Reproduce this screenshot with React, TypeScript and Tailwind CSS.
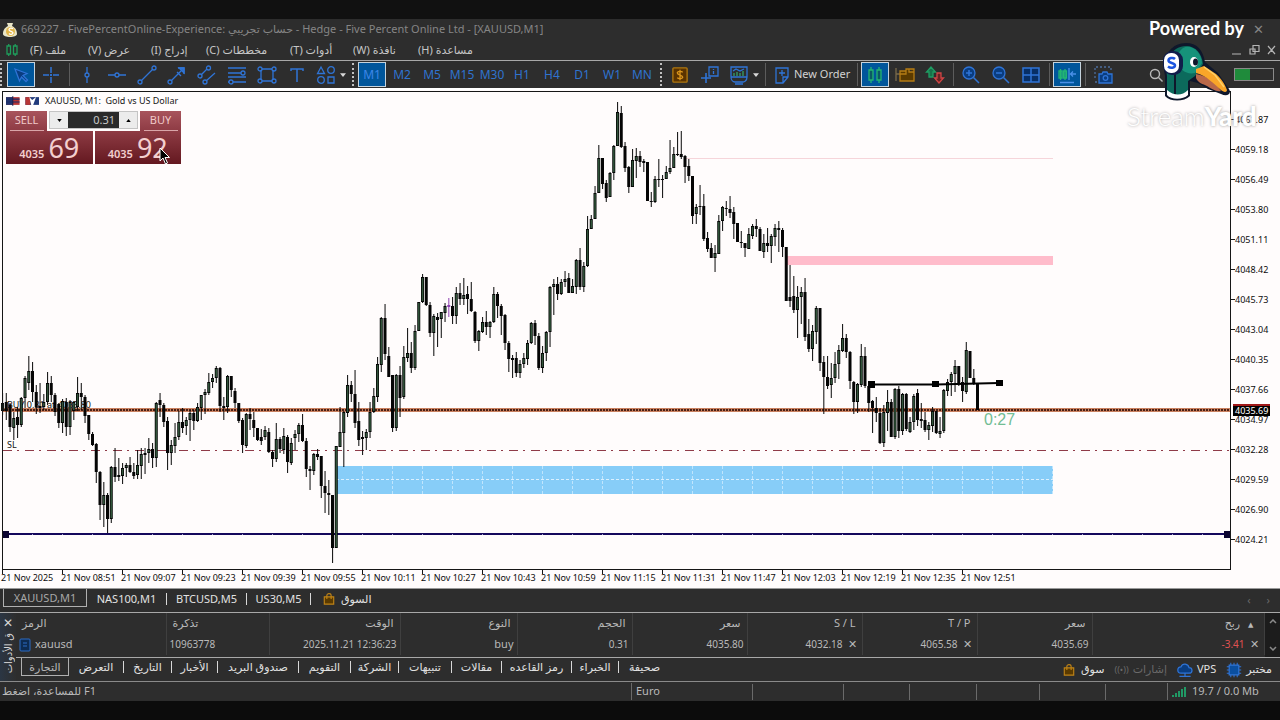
import type { ReactNode } from 'react'

// One-minute candles: [high, bodyTop, bodyBottom, low, kind]; kind 1 = up, 0 = down, 2 = flat marker
type Candle = [number, number, number, number, number]

const candles: Candle[] = [
  [393,403,411,415,1],[393,402,411,420,0],[403,405,427,432,0],[412,418,428,440,1],[407,417,425,438,0],[397,398,425,427,1],[376,378,398,408,1],[356,371,383,390,1],[362,371,392,402,0],[385,392,407,414,0],
  [383,406,408,413,0],[394,402,407,410,1],[372,383,402,405,1],[376,383,395,402,0],[393,395,412,416,0],[403,404,423,428,0],[399,401,423,433,1],[398,402,427,436,0],[400,402,427,435,1],[401,402,411,420,1],
  [377,393,407,411,1],[383,393,397,410,0],[395,397,416,423,0],[415,415,434,440,0],[432,434,445,446,0],[443,444,472,483,0],[471,472,505,520,0],[482,495,505,527,1],[493,495,519,533,0],[466,467,519,523,1],
  [448,467,477,482,0],[458,475,477,481,0],[463,468,476,484,1],[463,465,468,477,1],[457,465,472,473,0],[463,472,476,479,0],[450,465,475,479,1],[448,454,466,479,1],[448,453,455,474,0],[438,449,453,463,1],
  [443,449,458,468,0],[402,403,458,467,1],[393,400,405,417,0],[403,405,422,427,0],[417,421,453,470,0],[440,445,453,465,1],[423,437,446,453,1],[411,422,437,440,1],[408,422,428,433,0],[417,420,426,435,1],
  [410,413,420,441,1],[410,413,421,430,0],[403,407,421,422,1],[395,395,408,420,1],[389,392,395,414,1],[373,382,393,395,1],[374,378,382,388,1],[366,368,378,383,1],[367,368,406,412,0],[397,406,408,420,0],
  [375,376,407,413,1],[376,376,390,397,0],[388,391,403,408,0],[403,403,421,423,0],[418,420,445,453,0],[413,414,446,448,1],[408,414,419,430,0],[412,420,428,437,0],[428,428,440,441,0],[429,437,441,445,0],
  [426,430,437,440,1],[428,432,452,453,0],[450,452,459,467,0],[423,439,459,462,1],[437,439,449,453,0],[428,436,450,454,1],[435,437,462,473,0],[438,443,463,465,1],[430,434,438,450,1],[423,425,434,442,1],
  [414,425,441,442,0],[438,441,469,477,0],[466,469,471,490,0],[453,454,471,475,1],[449,454,457,460,0],[456,456,486,498,0],[471,486,493,513,0],[480,493,495,515,0],[495,495,548,563,0],[446,446,548,548,1],
  [407,432,447,447,1],[411,412,433,467,1],[375,385,413,417,1],[381,385,394,402,0],[370,394,423,428,0],[402,421,440,446,0],[431,437,439,455,1],[429,432,438,450,1],[402,412,432,438,1],[388,396,412,413,1],
  [357,364,397,402,1],[317,318,365,372,1],[304,318,354,360,0],[347,356,377,377,0],[375,375,428,432,0],[374,375,428,431,1],[366,375,398,417,0],[346,357,397,399,1],[328,353,358,362,1],[342,353,368,373,0],
  [325,331,368,370,1],[302,302,331,331,1],[274,277,302,303,1],[277,277,305,306,0],[302,305,333,337,0],[314,316,333,356,1],[313,317,320,347,0],[312,312,319,338,1],[303,306,313,322,1],[298,305,307,317,2],
  [297,306,316,324,0],[287,293,316,324,1],[283,293,299,305,0],[278,295,299,305,1],[286,294,299,314,0],[282,299,311,312,0],[311,312,341,343,0],[330,331,341,351,1],[317,322,332,333,1],[311,322,327,335,0],
  [321,322,327,338,1],[287,294,322,323,1],[292,294,306,318,0],[304,306,316,335,0],[314,315,343,350,0],[341,343,359,372,0],[355,358,360,378,0],[352,358,373,377,0],[360,364,373,378,1],[353,358,364,368,1],
  [340,343,359,365,1],[322,323,343,344,1],[320,323,336,345,0],[333,336,368,370,0],[346,353,368,373,1],[331,332,353,361,1],[286,287,332,347,1],[279,284,287,315,1],[277,284,294,300,0],[279,282,294,295,1],
  [271,279,282,287,1],[273,278,293,293,0],[279,286,293,293,1],[259,260,287,294,1],[248,260,287,290,0],[262,266,287,292,1],[216,229,266,267,1],[215,219,229,229,1],[186,193,219,219,1],[145,158,193,193,1],
  [158,158,184,189,0],[180,183,198,202,0],[172,173,197,197,1],[145,146,173,180,1],[102,112,146,146,1],[106,113,147,148,0],[142,146,168,172,0],[166,167,187,193,0],[149,160,187,187,1],[148,156,161,178,1],
  [151,156,162,167,0],[159,161,163,172,0],[162,162,201,201,0],[192,201,202,207,0],[176,179,202,203,1],[159,179,180,187,0],[175,179,180,198,0],[166,172,179,179,1],[140,168,172,174,1],[147,154,168,168,1],
  [132,154,155,156,0],[131,154,157,159,0],[155,156,167,183,0],[159,166,176,181,0],[176,176,216,224,0],[204,207,214,224,1],[185,206,207,215,0],[194,206,239,241,0],[232,238,249,252,0],[243,248,258,258,0],
  [245,253,258,272,1],[215,221,254,254,1],[206,207,221,231,1],[201,208,209,216,0],[196,209,213,218,0],[207,212,224,239,0],[223,223,242,242,0],[231,242,243,248,0],[243,243,248,257,0],[228,234,249,249,1],
  [224,226,236,239,1],[219,226,229,237,0],[227,229,251,251,0],[234,243,252,258,1],[228,243,246,252,0],[234,236,246,263,1],[224,228,237,246,1],[221,228,230,252,0],[228,230,247,257,0],[247,247,301,301,0],
  [265,297,301,307,0],[276,296,310,313,0],[286,297,310,338,1],[287,292,297,324,1],[278,292,337,341,0],[319,334,349,352,0],[325,331,349,361,1],[306,308,332,344,1],[308,308,363,371,0],[356,362,377,414,0],
  [356,377,386,389,0],[363,378,385,398,1],[352,364,378,383,1],[345,350,364,379,1],[324,338,351,352,1],[334,338,352,358,0],[351,352,381,389,0],[381,382,402,414,0],[383,384,402,413,1],[344,356,385,387,1],
  [347,356,386,388,0],[386,386,403,412,0],[400,401,408,433,0],[397,408,413,422,0],[408,413,443,444,0],[405,412,443,447,1],[390,402,413,431,1],[399,402,437,437,0],[388,389,437,439,1],[386,389,431,438,0],
  [393,394,431,435,1],[393,394,429,431,0],[417,422,432,433,1],[394,396,422,430,1],[389,393,420,426,0],[403,419,421,428,0],[412,420,430,432,0],[422,425,430,440,1],[407,411,426,432,1],[411,411,433,434,0],
  [417,431,434,438,1],[389,390,431,433,1],[379,382,391,396,1],[372,374,382,396,1],[360,366,374,392,1],[366,366,383,386,0],[377,382,391,402,0],[342,350,392,394,1],[351,351,378,378,0],[369,378,383,385,0],
  [383,383,410,410,0],
]

const prices = ['4061.87', '4059.18', '4056.49', '4053.80', '4051.11', '4048.42', '4045.73', '4043.04', '4040.35', '4037.66', '4034.97', '4032.28', '4029.59', '4026.90', '4024.21']
const times = ['2025', '08:51', '09:07', '09:23', '09:39', '09:55', '10:11', '10:27', '10:43', '10:59', '11:15', '11:31', '11:47', '12:03', '12:19', '12:35', '12:51']

function Chart() {
  return (
    <svg viewBox="0 90 1280 498" className="block w-full bg-[#fffcfc]" role="img" aria-label="XAUUSD M1">
      <g shapeRendering="crispEdges">
        <rect x="685" y="158" width="368" height="1" fill="#f6d5da" />
        <rect x="785" y="256" width="268" height="9" fill="#ffbccb" />
        <rect x="336" y="466" width="717" height="28" fill="#87cdf8" />
        <path d="M336 479.5H1053" stroke="#d9f0ff" strokeDasharray="3 2" />
        {Array.from({ length: 24 }, (_, i) => (
          <path key={i} d={`M${362.5 + i * 30} 466V494`} stroke="#bfe5fd" strokeDasharray="3 2" />
        ))}
        <path d="M3 450.5H1231" stroke="#8f3b48" strokeDasharray="9 5 2 6" />
        <rect x="3" y="533" width="1225" height="2" fill="#14085c" />
        {Array.from({ length: 40 }, (_, i) => (
          <rect key={i} x={32 + i * 30} y="534" width="1" height="1" fill="#a9a3d0" />
        ))}
        <rect x="3" y="531" width="6" height="7" fill="#0b0430" />
        <rect x="1224" y="531" width="7" height="7" fill="#0b0430" />
        <rect x="3" y="408" width="1228" height="4" fill="#c9805f" />
        <path d="M3 410H1231" stroke="#4a2015" strokeWidth="2" strokeDasharray="2 1" />
      </g>
      <g fontFamily="'Liberation Sans Narrow','Noto Sans',sans-serif" fontSize="9" fill="#111">
        <text x="7" y="408">BUY 0.31 at 4035.80</text>
        <text x="7" y="448">SL</text>
      </g>
      {candles.map(([high, top, bottom, low, kind], i) => {
        const x = 2.5 + i * 3.75
        const line = kind === 2 ? '#8d3fb0' : '#050505'
        return (
          <g key={i}>
            <rect x={x - 0.5} y={high} width="1.1" height={low - high} fill={line} opacity="0.9" />
            <rect x={x - 1.5} y={top} width="3" height={Math.max(1, bottom - top)} fill={line} />
            {kind === 1 && bottom - top > 2 && (
              <rect x={x - 0.7} y={top + 1} width="1.5" height={bottom - top - 2} fill="#31543a" />
            )}
          </g>
        )
      })}
      <path d="M872 384.5H936L999 383" stroke="#000" strokeWidth="2" fill="none" />
      <path d="M868 381h7v7h-7zM932 381h7v6h-7zM996 380h7v6h-7z" />
      <text x="984" y="425" fontFamily="'Liberation Sans',sans-serif" fontSize="16" fill="#72bd94">0:27</text>
      <path d="M2.5 569.5V91.500H1230.500V569.500z" fill="none" stroke="#161616" shapeRendering="crispEdges" />
      <g fontFamily="'Liberation Sans Narrow','Noto Sans',sans-serif" fontSize="9" fill="#0c0c0c">
        {prices.map((p, i) => (
          <g key={p}>
            <path d={`M1231 ${119.5 + i * 30}h4`} stroke="#161616" />
            <text x="1235" y={123 + i * 30}>{p}</text>
          </g>
        ))}
        {times.map((t, i) => (
          <g key={t}>
            <path d={`M${2.5 + i * 60} 570v4`} stroke="#161616" />
            <text x={1 + i * 60} y="581">21 Nov {t}</text>
          </g>
        ))}
        <rect x="1233" y="404" width="37" height="3" fill="#a01818" />
        <rect x="1233" y="406" width="37" height="10" fill="#000" />
        <text x="1235" y="414" fill="#fff">4035.69</text>
      </g>
    </svg>
  )
}

function Icon({ children, size = 'size-5' }: { children: ReactNode; size?: string }) {
  return (
    <svg viewBox="0 0 20 20" className={`${size} shrink-0`} fill="none" stroke="#2f74d6" strokeWidth="1.3" aria-hidden="true">
      {children}
    </svg>
  )
}

function Tool({ label, active, children, width = 'w-[30px]' }: { label: string; active?: boolean; children: ReactNode; width?: string }) {
  return (
    <button
      type="button"
      aria-label={label}
      className={`${width} flex h-full shrink-0 items-center justify-center p-px`}
    >
      <span className={active ? 'flex h-[25px] w-7 items-center justify-center border border-[#c5d3dd] bg-[#00569b]' : 'flex items-center gap-1'}>
        {children}
      </span>
    </button>
  )
}

const Sep = () => (
  <span className="flex h-full w-1.5 shrink-0 justify-center py-0.5">
    <span className="w-px bg-[#5c5c5c]" />
  </span>
)
const Grip = () => (
  <span className="flex h-full w-2 shrink-0 justify-center py-0.5">
    <span className="border-l-2 border-dotted border-[#c0c0c0]" />
  </span>
)
const Caret = () => (
  <svg viewBox="0 0 8 5" className="h-1 w-1.5" fill="#d8d8d8" aria-hidden="true"><path d="M0 0h8L4 5z" /></svg>
)

const menu = [
  { t: 'ملف (F)', w: 'w-[58px]' },
  { t: 'عرض (V)', w: 'w-[63px]' },
  { t: 'إدراج (I)', w: 'w-[55px]' },
  { t: 'مخططات (C)', w: 'w-[84px]' },
  { t: 'أدوات (T)', w: 'w-[63px]' },
  { t: 'نافذة (W)', w: 'w-[65px]' },
  { t: 'مساعدة (H)', w: 'w-[76px]' },
]

function Toolbar() {
  return (
    <div className="flex h-7 items-center border-t border-[#a8a8a8] text-[12px] text-[#2f73cf]">
      <span className="flex h-full w-1.5 shrink-0 py-0.5"><span className="border-l-2 border-dotted border-[#c0c0c0]" /></span>
      <Tool label="Cursor" active><Icon><path d="M4 4l4.500 12 2-4 4.500 4.500 1.500-1.500-4.500-4.500 4-2z" fill="#0a3d80" /></Icon></Tool>
      <Tool label="Crosshair"><Icon><path d="M10 2v6M10 12v6M2 10h6M12 10h6M9 10h2M10 9v2" strokeWidth="1.500" /></Icon></Tool>
      <Sep />
      <Tool label="Vertical line"><Icon><path d="M10 2v6M10 12v6" /><circle cx="10" cy="10" r="2" /></Icon></Tool>
      <Tool label="Horizontal line"><Icon><path d="M1 10h7M12 10h7" /><circle cx="10" cy="10" r="2" /></Icon></Tool>
      <Tool label="Trendline"><Icon><path d="M4.500 15.500L15.500 4.500" /><circle cx="3" cy="17" r="2" /><circle cx="17" cy="3" r="2" /></Icon></Tool>
      <Tool label="Arrow line"><Icon><path d="M4.500 15.500L17 3M11 3h6v6M10 7l4 4" /><circle cx="3" cy="17" r="2" /><path d="M12 3h5v5z" fill="#2d6cc4" /></Icon></Tool>
      <Tool label="Channel"><Icon><path d="M4.500 9.500L10 4M9 16L18 8" /><circle cx="3" cy="11" r="2" /><circle cx="11.500" cy="3" r="2" /><circle cx="8" cy="17" r="2" /></Icon></Tool>
      <Tool label="Fibonacci"><Icon><path d="M1 3h18M1 8h13M1 12h18M6 17h13M1 17h1" /><circle cx="16" cy="8" r="2" /><circle cx="4" cy="17" r="2" /></Icon></Tool>
      <Tool label="Rectangle"><Icon><path d="M5 4h10M5 16h10M4 5v10M16 5v10" /><circle cx="3" cy="4" r="2" /><circle cx="17" cy="4" r="2" /><circle cx="3" cy="16" r="2" /><circle cx="17" cy="16" r="2" /></Icon></Tool>
      <Tool label="Text"><Icon><path d="M4 6V4h12v2M10 4v13" strokeWidth="1.500" /></Icon></Tool>
      <Tool label="Shapes" width="w-[37px]"><Icon><path d="M5 2l3.500 6.500h-7zM12 12h6v6h-6z" /><circle cx="15" cy="5" r="3.300" /><circle cx="5" cy="15" r="3.300" /></Icon><Caret /></Tool>
      <Grip />
      {['M1', 'M2', 'M5', 'M15', 'M30', 'H1', 'H4', 'D1', 'W1', 'MN'].map((t, i) => (
        <Tool key={t} label={t} active={i === 0}><span className={i === 0 ? 'text-[#3d86e8]' : ''}>{t}</span></Tool>
      ))}
      <Grip />
      <Tool label="Depth of market"><svg viewBox="0 0 18 18" className="size-4" aria-hidden="true"><rect x="1" y="1" width="16" height="16" rx="1" fill="#5a3300" stroke="#b0780f" strokeWidth="1.500" /><path d="M12 6c-1-1.500-6-1.500-6 .8S12 9 12 11.300 7 13.500 6 12M9 3v12" fill="none" stroke="#d8941c" strokeWidth="1.500" /></svg></Tool>
      <Tool label="Data window"><Icon><path d="M6 8v10M1 13h10" strokeWidth="1.600" /><path d="M9 2h9v9H9zM13.500 4v1M13.500 6v3" /></Icon></Tool>
      <Tool label="Indicators" width="w-[37px]"><Icon><path d="M2 2h16v10c0 4-3 5-4 5H6c-2 0-4-2-4-5zM2 12h16M6 19h8" /><path d="M5 11V8M8 11V7M11 11V8M14 11V6" stroke="#35a06a" /><path d="M4 6l3-2 4 2 4-2" /></Icon><Caret /></Tool>
      <Sep />
      <button type="button" className="flex h-full w-[86px] shrink-0 items-center gap-0.5 whitespace-nowrap pl-1 text-[11px] text-[#d2d2d2]">
        <Icon><path d="M4 3h12v9l-5 6H4zM11 18v-6h5M7 8h6M10 5v6" /></Icon>
        New Order
      </button>
      <Sep />
      <Tool label="Candlesticks" active><Icon><g stroke="#22b573" fill="#0b5a63"><path d="M4 5h4v10H4zM12 5h4v10h-4zM6 2v3M6 15v3M14 2v3M14 15v3" /></g></Icon></Tool>
      <Tool label="Chart shift"><Icon><path d="M1 3v13M1 9h4" stroke="#7a6a4a" /><path d="M5 6h6V4h8v12H5zM11 6v3H5M14 4v3h5" fill="#5a3a00" stroke="#b57c14" /></Icon></Tool>
      <Tool label="Trade levels"><Icon><path d="M6 2L1.500 7H4v5h4V7h2.500z" stroke="#1f9d63" fill="#17724a" /><path d="M14 18l-4.500-5H12V8h4v5h2.500z" stroke="#d04545" fill="#692323" /></Icon></Tool>
      <Sep />
      <Tool label="Zoom in"><Icon><circle cx="8" cy="8" r="6" fill="#0a3d80" /><path d="M12.500 12.500L18 18M8 5v6M5 8h6" strokeWidth="1.500" /></Icon></Tool>
      <Tool label="Zoom out"><Icon><circle cx="8" cy="8" r="6" fill="#0a3d80" /><path d="M12.500 12.500L18 18M5 8h6" strokeWidth="1.500" /></Icon></Tool>
      <Tool label="Tile windows"><Icon><path d="M2 3h16v14H2zM10 3v14M2 10h16" fill="#082f66" strokeWidth="1.500" /></Icon></Tool>
      <Sep />
      <Tool label="Auto scroll" active><Icon><path d="M2 6h3v7H2zM6.500 6h3v7h-3zM3.500 4v11M8 4v11" stroke="#22b573" /><path d="M12 3v12M19 9h-5M16 6.500L13.500 9l2.500 2.500M3 17.500h14" stroke="#4a90e8" /></Icon></Tool>
      <Sep />
      <Tool label="Screenshot"><Icon><path d="M2 13V2h16v3M2 17h3" strokeDasharray="2 2" stroke="#4d6f9e" /><path d="M6 9h3l1-2h4l1 2h4v9H6z" fill="#0a3d80" /><circle cx="12.500" cy="13" r="2.300" /></Icon></Tool>
      <div className="ml-auto flex items-center gap-[71px] pr-1.5">
        <svg viewBox="0 0 14 14" className="size-3.5" fill="none" stroke="#b8b8b8" strokeWidth="1.400" aria-hidden="true"><circle cx="6" cy="6" r="4.500" /><path d="M9.500 9.500L13.500 13.500" /></svg>
        <span className="flex h-[13px] w-10 border border-[#8a8a8a]"><span className="w-[15px] bg-[#1f8b3b]" /></span>
      </div>
    </div>
  )
}

const Triangle = ({ up }: { up?: boolean }) => (
  <svg viewBox="0 0 6 4" className="mx-auto h-[3px] w-[5px]" aria-hidden="true"><path d={up ? 'M0 4h6L3 0z' : 'M0 0h6L3 4z'} /></svg>
)

function TradePanel() {
  const side = 'flex flex-1 items-end justify-center gap-1 bg-linear-to-b from-[#8e3b44] to-[#641820] text-[#f3cfcf]'
  const head = 'flex w-[41px] flex-col items-center justify-between bg-linear-to-b from-[#a8545c] to-[#8e3b44] text-[#f0c9c9]'
  return (
    <div className="absolute left-1.5 top-0.5 w-[175px]">
      <div className="flex h-[17px] items-center gap-1.5 text-[#151515]">
        <svg viewBox="0 0 34 10" className="h-2.5 w-[33px]" aria-hidden="true">
          <path d="M0 1h14v8H0z" fill="#b83434" /><path d="M0 1h7v8H0z" fill="#24356f" /><path d="M0 3h14M0 6h14" stroke="#1d2d69" strokeWidth="1.200" /><path d="M7 0v10" stroke="#181c4b" />
          <path d="M20 1h14v8H20z" fill="#21397b" /><path d="M20 1h5v8h-5z" fill="#b83434" /><path d="M24 1l3 3 4-3-3 8h-2z" fill="#fff" />
        </svg>
        <span className="whitespace-pre font-['Liberation_Sans_Narrow','Noto_Sans',sans-serif] text-[9px]">XAUUSD, M1:  Gold vs US Dollar</span>
      </div>
      <div className="mt-0.5 flex h-5 text-[11px] leading-[18px]">
        <button type="button" className={head}>SELL<span className="h-px w-[34px] shrink-0 bg-[#d9a5a8]" /></button>
        <div className="mx-0.5 flex h-[18px] flex-1 border border-[#c4c4c4] bg-[#ececec] text-black">
          <button type="button" aria-label="Decrease volume" className="w-[18px]"><Triangle /></button>
          <input aria-label="Volume" defaultValue="0.31" className="w-0 min-w-0 flex-1 bg-[#2a2a2a] pr-1 text-right text-[#c8c8c8]" />
          <button type="button" aria-label="Increase volume" className="w-[18px]"><Triangle up /></button>
        </div>
        <button type="button" className={head}>BUY<span className="h-px w-[34px] shrink-0 bg-[#d9a5a8]" /></button>
      </div>
      <div className="flex h-[33px] gap-0.5">
        <button type="button" className={side}><b className="pb-1 text-[11px] leading-3 font-semibold">4035</b><span className="text-[27px] leading-8">69</span></button>
        <button type="button" className={side}><b className="pb-1 text-[11px] leading-3 font-semibold">4035</b><span className="text-[27px] leading-8">92</span></button>
      </div>
      <svg viewBox="0 0 12 18" className="absolute left-[153px] top-[55px] h-[18px] w-3" aria-hidden="true"><path d="M1 1v13l3-3 2.500 6 2-1-2.500-5.500h4.500z" fill="#000" stroke="#fff" /></svg>
    </div>
  )
}

function Watermark() {
  return (
    <div className="pointer-events-none absolute right-0 top-[17px] flex w-[153px] flex-col font-[Lato,sans-serif] text-white">
      <span className="pl-[22px] text-[18px] font-bold leading-[23px]">Powered by</span>
      <svg viewBox="0 0 70 62" className="ml-[34px] h-[62px] w-[70px]" aria-hidden="true">
        <path d="M4 56V36C0 20 8 3 25 3c11 0 17 7 19 19l13 11 11 16c3 5-2 8-8 5L47 49l-10-6-8-2v15c-6 6-20 6-25 0z" fill="#0f172b" />
        <path d="M6 54V36C4 20 11 6 25 6c10 0 16 8 17 18l-8 12-7 5v13c-5 5-17 5-21 0z" fill="#0c6a5c" />
        <path d="M22 8c8-4 18 3 19 15l-7 10c-8 2-16-3-18-12 0-5 2-10 6-13z" fill="#16927a" />
        <path d="M6 50c7 6 15 6 21 0v5c-5 5-17 5-21 0z" fill="#fff" />
        <path d="M35 34c9 2 17 5 25 17-5 1-9-2-14-5-4-2-9-3-11-8z" fill="#b9694a" />
        <path d="M35 29l8-3 12 8c6 5 9 11 11 16 0 3-4 2-6 0-7-6-14-14-25-17z" fill="#f9a629" />
        <path d="M43 27l11 8 9 12" fill="none" stroke="#ffd066" strokeWidth="1.500" />
        <ellipse cx="33" cy="22" rx="4" ry="5" fill="#fff" /><ellipse cx="34.500" cy="22" rx="2.500" ry="3.500" fill="#0f172b" />
        <path d="M14 32v22" stroke="#0f172b" strokeWidth="2" />
        <rect x="2" y="11" width="20" height="24" rx="9" fill="#101d4a" /><rect x="3" y="13" width="15" height="20" rx="7" fill="#fff" />
        <path d="M14 19c-2-2-6.500-1-6.500 1.500 0 3 6.500 2 6.500 5 0 2.500-4.500 3-7 1" fill="none" stroke="#1c55e0" strokeWidth="2.500" />
      </svg>
      <span className="text-[26px] leading-7 [text-shadow:0_0_3px_#999]"><span className="font-light">Stream</span><span className="font-black">Yard</span></span>
    </div>
  )
}

const Bag = () => (
  <svg viewBox="0 0 14 14" className="h-3.5 w-3 shrink-0" fill="#5a3a00" stroke="#c08416" strokeWidth="1.300" aria-hidden="true"><path d="M1.500 4.500h11v8.500h-11z" /><path d="M4.500 7V3c0-3 5-3 5 0v4" fill="none" /></svg>
)

const columns = [
  { h: 'الرمز', v: 'xauusd', w: 'w-[150px]' },
  { h: 'تذكرة', v: '10963778', w: 'w-[103px]' },
  { h: 'الوقت', v: '2025.11.21 12:36:23', w: 'w-[131px]' },
  { h: 'النوع', v: 'buy', w: 'w-[117px]' },
  { h: 'الحجم', v: '0.31', w: 'w-[115px]' },
  { h: 'سعر', v: '4035.80', w: 'w-[115px]' },
  { h: 'S / L', v: '4032.18', w: 'w-[115px]', close: true },
  { h: 'T / P', v: '4065.58', w: 'w-[115px]', close: true },
  { h: 'سعر', v: '4035.69', w: 'w-[115px]' },
  { h: 'ربح', v: '-3.41', w: 'w-[172px]', close: true },
]

const panels = [
  { t: 'التعرض', w: 'w-[55px]' },
  { t: 'التاريخ', w: 'w-12' },
  { t: 'الأخبار', w: 'w-[46px]' },
  { t: 'صندوق البريد', w: 'w-[81px]' },
  { t: 'التقويم', w: 'w-[52px]' },
  { t: 'الشركة', w: 'w-12' },
  { t: 'تنبيهات', w: 'w-[53px]' },
  { t: 'مقالات', w: 'w-[50px]' },
  { t: 'رمز القاعده', w: 'w-[70px]' },
  { t: 'الخبراء', w: 'w-[47px]' },
  { t: 'صحيفة', w: 'w-[51px]' },
]

function Toolbox() {
  return (
    <section className="flex border-t border-[#a8a8a8]">
      <div className="flex w-4 shrink-0 flex-col items-center bg-linear-to-r from-[#2b3644] to-[#2e2e2e] text-[#d8d8d8]">
        <button type="button" aria-label="Close toolbox" className="h-5 text-[12px] leading-5">✕</button>
        <span dir="rtl" className="rotate-180 whitespace-nowrap text-[10px] leading-4 [writing-mode:vertical-rl]">ق الأدوات</span>
      </div>
      <div className="min-w-0 flex-1">
        <div className="flex border-b border-[#a8a8a8]">
          <table className="mb-0.5 w-full table-fixed border-collapse text-[11px] text-[#b9b9b9]">
            <thead>
              <tr className="h-[21px]">
                {columns.map((c, i) => (
                  <th key={i} className={`${c.w} border-r border-[#3f3f3f] px-1.5 font-normal ${i < 2 ? 'text-left' : 'text-right'}`}>
                    {c.h}{i === 9 && <span className="ml-2 mr-1 text-[7px]">▲</span>}
                  </th>
                ))}
              </tr>
            </thead>
            <tbody>
              <tr className="h-[21px]">
                {columns.map((c, i) => (
                  <td key={i} className={`whitespace-nowrap border-r border-[#3f3f3f] px-[3px] ${i < 2 ? '' : 'text-right'} ${i === 0 || i === 3 ? '' : 'text-[10px]'}`}>
                    {i === 0 && <svg viewBox="0 0 12 14" className="mr-1 inline h-3.5 w-3 align-middle" fill="#0d2b52" stroke="#2d6cc4" aria-hidden="true"><rect x="1" y="1" width="10" height="12" rx="1" /><path d="M4 5h4M4 8h4" /></svg>}
                    <span className={i === 9 ? 'text-[#e05252]' : ''}>{c.v}</span>
                    {c.close && <button type="button" aria-label="Remove" className="ml-1 w-3 text-center text-[11px] font-bold">✕</button>}
                  </td>
                ))}
              </tr>
            </tbody>
          </table>
          <div className="flex w-4 shrink-0 flex-col items-center justify-between bg-[#1c1c1c] py-1.5" aria-hidden="true">
            <svg viewBox="0 0 8 5" className="w-2" fill="none" stroke="#8a8a8a" strokeWidth="1.500"><path d="M1 4l3-3 3 3" /></svg>
            <svg viewBox="0 0 8 5" className="w-2" fill="none" stroke="#8a8a8a" strokeWidth="1.500"><path d="M1 1l3 3 3-3" /></svg>
          </div>
        </div>
        <nav className="flex h-[23px] text-[11px] text-[#e2e2e2]">
          <button type="button" className="ml-[5px] h-[18px] w-12 border border-t-0 border-[#b0b0b0] leading-4 text-[#b9b9b9]">التجارة</button>
          {panels.map((p, i) => (
            <button key={p.t} type="button" className={`${p.w} flex h-[18px] items-center justify-center whitespace-nowrap`}>
              <span className="flex-1 text-center">{p.t}</span>
              {i < panels.length - 1 && <span className="h-3 w-px bg-[#d8d8d8]" />}
            </button>
          ))}
          <div className="ml-auto flex items-center gap-2.5 pr-2">
            <button type="button" className="flex items-center gap-1.5"><Bag />سوق</button>
            <button type="button" className="flex items-center gap-1 text-[#6a6a6a]"><span className="text-[9px]">((•))</span>إشارات</button>
            <button type="button" className="flex items-center gap-1"><Icon size="size-4"><path d="M5 14a4 4 0 010-8c2-5 9-4 10 1 5 0 5 7 0 7zM10 14v4M3 18h14" fill="#0a3d80" strokeWidth="1.500" /></Icon>VPS</button>
            <button type="button" className="flex items-center gap-1"><Icon size="size-4"><path d="M4 4h12v12H4z" fill="#0a4fa0" strokeWidth="1.500" /><path d="M6 1v3M10 1v3M14 1v3M6 16v3M10 16v3M14 16v3M1 6h3M1 10h3M1 14h3M16 6h3M16 10h3M16 14h3" /></Icon>مختبر</button>
          </div>
        </nav>
      </div>
    </section>
  )
}

export default function App() {
  return (
    <main className="relative flex min-h-screen flex-col bg-[#2d2d2d] font-['Noto_Sans','DejaVu_Sans',sans-serif]">
      <div className="h-[19px] bg-[#111]" />
      <header className="flex h-[21px] items-center gap-[3px] pl-0.5 text-[11px] text-[#858585]">
        <svg viewBox="0 0 16 16" className="size-4" aria-hidden="true"><path d="M5 1h6l-1 3c4 2 5 5 5 8 0 4-14 4-14 0 0-3 1-6 5-8z" fill="#e9e6c8" /><circle cx="8.500" cy="9.500" r="4.500" fill="#e2b64a" /><path d="M11 7c-1-1.500-4-1-4 .8s4 1.200 4 3-3 2-4 .7" fill="none" stroke="#fff" strokeWidth="1.300" /></svg>
        <h1 className="whitespace-nowrap">669227 - FivePercentOnline-Experience: <bdi>حساب تجريبي</bdi> - Hedge - Five Percent Online Ltd - [XAUUSD,M1]</h1>
        <span className="ml-auto pr-4 text-[13px]">✕</span>
      </header>
      <nav className="flex h-5 items-center pl-1.5 text-[11px] text-[#c6c6c6]">
        <svg viewBox="0 0 12 12" className="mr-3 h-3 w-3" fill="none" stroke="#1f9d5b" strokeWidth="1.300" aria-hidden="true"><path d="M1 2h3.500v8H1zM7.500 2H11v8H7.500zM2.700 0v2M2.700 10v2M9.200 0v2M9.200 10v2" /></svg>
        {menu.map((m) => <button key={m.t} type="button" dir="rtl" className={`${m.w} flex justify-end whitespace-nowrap`}>{m.t}</button>)}
        <div className="ml-auto flex items-center gap-2.5 pr-1" aria-hidden="true">
          <svg viewBox="0 0 44 12" className="h-3 w-11" fill="none" stroke="#b5b5b5" strokeWidth="1.200"><path d="M0 10h9M21 1.500h6v6h-6zM18 5h5v5h-5zM36 2l7 8M43 2l-7 8" /></svg>
        </div>
      </nav>
      <Toolbar />
      <div className="relative border-t-2 border-white">
        <Chart />
        <TradePanel />
      </div>
      <div className="flex h-6 border-t border-[#9a9a9a] text-[11px] text-[#e2e2e2]">
        <button type="button" className="ml-[3px] h-[18px] w-[84px] border border-t-0 border-[#b0b0b0] leading-4 text-[#a8a8a8]">XAUUSD,M1</button>
        <div className="flex h-[19px] items-center divide-x divide-[#d8d8d8] leading-3">
          <button type="button" className="w-20">NAS100,M1</button>
          <button type="button" className="w-20">BTCUSD,M5</button>
          <button type="button" className="w-16">US30,M5</button>
          <button type="button" className="flex items-center gap-1.5 pl-3"><Bag />السوق</button>
        </div>
        <div className="ml-auto flex items-center gap-4 pr-2.5 text-[#6a6a6a]" aria-hidden="true"><span>‹</span><span>›</span></div>
      </div>
      <Toolbox />
      <footer className="flex h-5 items-center border-t border-[#8a8a8a] text-[11px] text-[#b9b9b9]">
        <span className="flex-1 pl-0.5">للمساعدة، اضغط F1</span>
        <span className="w-[121px] border-l border-[#6a6a6a] pl-1">Euro</span>
        {['w-[91px]', 'w-[66px]', 'w-[67px]', 'w-[63px]', 'w-[66px]', 'w-[62px]'].map((w, i) => (
          <span key={i} className={`${w} h-4 border-l border-[#6a6a6a]`} />
        ))}
        <span className="flex w-[113px] items-center gap-1.5 border-l border-[#6a6a6a] pl-1">
          <svg viewBox="0 0 14 10" className="h-2.5 w-3.5" stroke="#20a66c" strokeWidth="1.800" aria-hidden="true"><path d="M1 10V8M4 10V6M7 10V4M10 10V2M13 10V0" /></svg>
          19.7 / 0.0 Mb
        </span>
      </footer>
      <div className="flex-1 bg-[#0c0c0c]" />
      <Watermark />
    </main>
  )
}
